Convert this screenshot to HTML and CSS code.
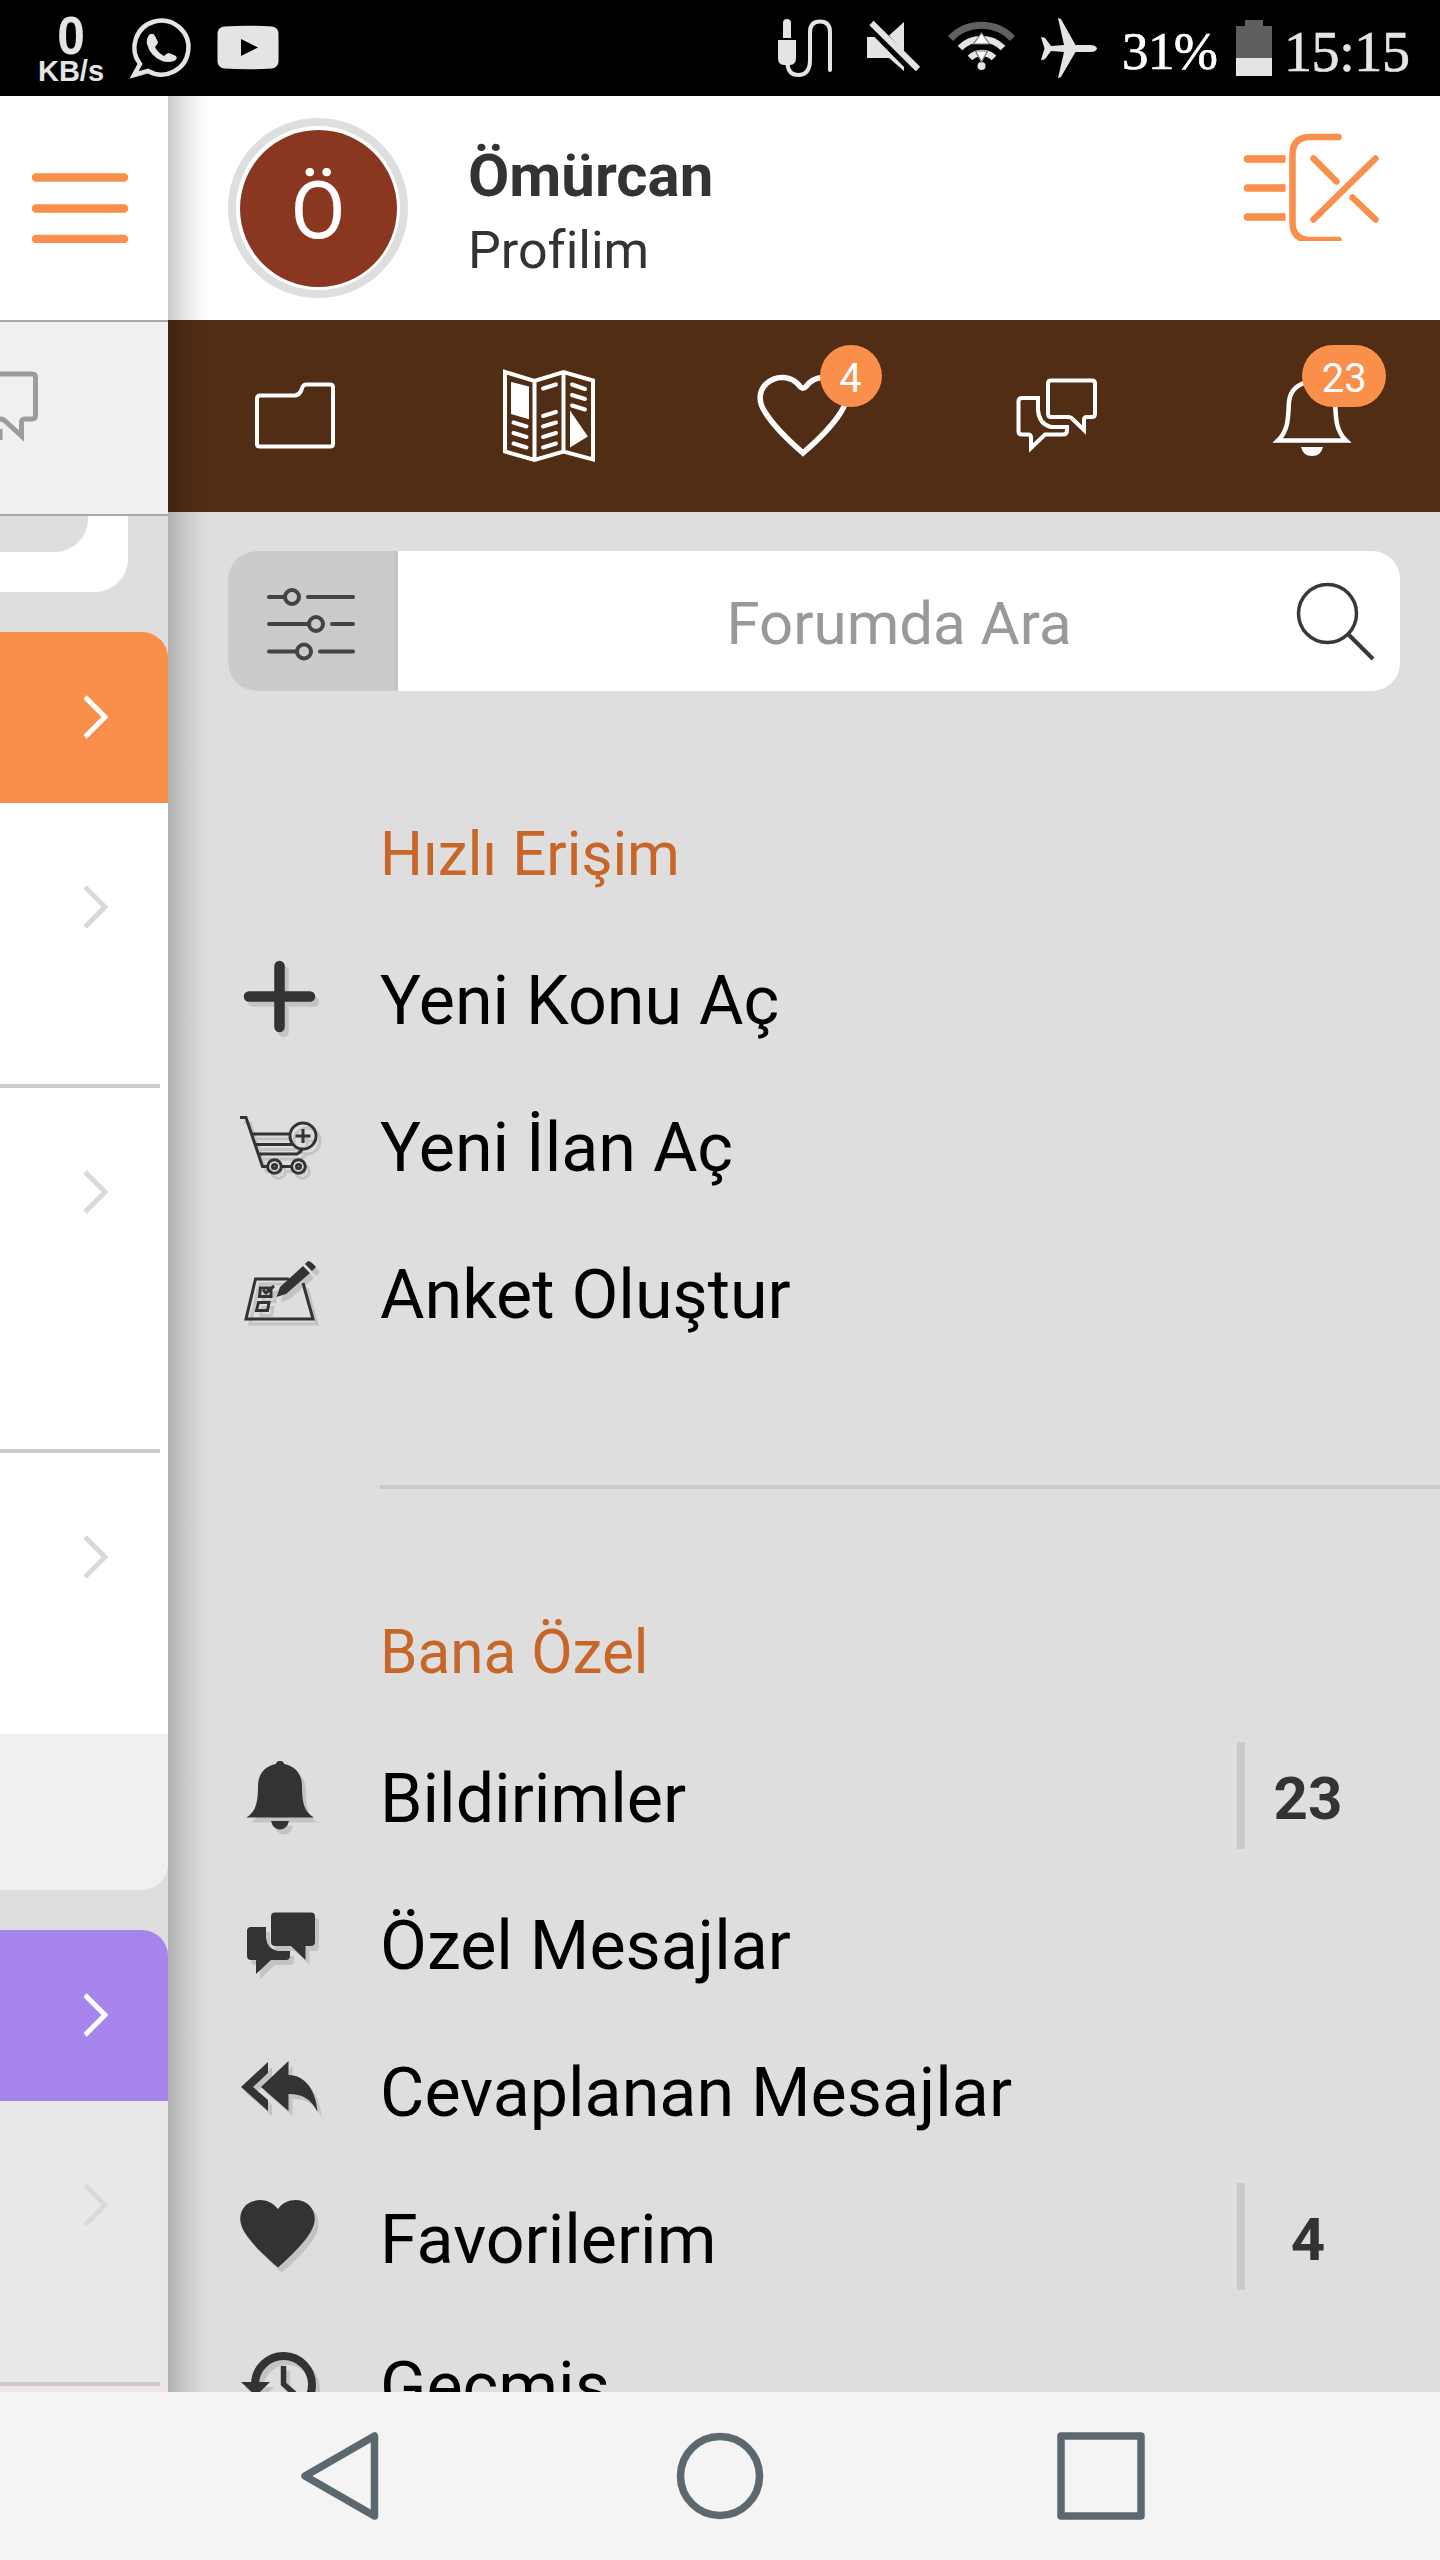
FILE: index.html
```html
<!DOCTYPE html>
<html lang="tr">
<head>
<meta charset="utf-8">
<title>Forum</title>
<link rel="stylesheet" href="styles.css">
</head>
<body>
<header class="status">
  <div class="speed"><span class="speed-value">0</span><span class="speed-unit">KB/s</span></div>
  <svg class="status-left" width="160" height="96" viewBox="124 0 160 96">
    <path d="M140 64A27 27 0 1 1 148 71L134 75Z" fill="none" stroke="#e4e4e4" stroke-width="4.5"/>
    <path d="M149 35q4-3 6 1l3 6q0 2-3 5q3 6 9 9q3-3 5-3l7 3q2 3-2 5q-6 2-12 0q-12-5-15-17q-1-5 2-9z" fill="#e4e4e4"/>
    <path d="M224 26.5q24-1.500 48 0q6 .5 6.500 7v28q-.5 6-6.500 7q-24 1.500-48 0q-6-1-6.500-7v-28q.5-6.500 6.500-7z" fill="#e4e4e4"/>
    <path d="M241 39l17 8.500-17 8.500z"/>
  </svg>
  <svg class="status-right" width="345" height="96" viewBox="770 0 345 96" fill="#e4e4e4">
    <path d="M783 38V23q0-4 4-4t4 4v15zM778 40h18v18q0 7-6 7h-6q-6 0-6-7z"/>
    <path d="M787.500 64q1 11 10.500 11q12 0 12-15V32q0-10.500 10-10.500T830 32v38" fill="none" stroke="#e4e4e4" stroke-width="4" stroke-linecap="round"/>
    <path d="M867 37h7.500L904 67v4L889 58h-22zM904 22l-15 13.500L904 52z"/>
    <path d="M871.500 23L918 69" stroke="#e4e4e4" stroke-width="6"/>
    <path d="M950.500 38.500a43 43 0 0 1 62 0" fill="none" stroke="#606060" stroke-width="7"/>
    <path d="M960 48a30 30 0 0 1 43 0M970 58a17 17 0 0 1 24 0" fill="none" stroke="#e4e4e4" stroke-width="6.500"/>
    <circle cx="981.500" cy="66" r="4"/>
    <path d="M981.500 33l8 11h-16zM981.500 62l6-11h-12z" fill="#fff" stroke="#777" stroke-width="1.200"/>
    <path d="M1097 48.500q-1-4-8-3.500h-13.500L1061.500 20q-1-2-3.500-2L1064 45l-13 1-5.500-7.500q-1-1.500-4.500-1.500l3.500 11.500L1041 60q3.500 0 4.500-1.500L1051 51l13 1-6 26q2.500 0 3.500-2L1075.500 52H1089q7 .5 8-3.500z"/>
  </svg>
  <span class="percent">31%</span>
  <svg class="battery" width="36" height="96" viewBox="0 0 36 96"><path d="M0 26h9v-6h18v6h9v50H0z" fill="#5e5e5e"/><path d="M0 58h36v18H0z" fill="#e4e4e4"/></svg>
  <span class="clock">15:15</span>
</header>

<main class="screen">
  <aside class="page">
    <div class="page-head">
      <svg width="96" height="70" viewBox="32 173 96 70"><path d="M36 177.500H124M36 208.500H124M36 239H124" stroke="#f98f4b" stroke-width="8.500" stroke-linecap="round"/></svg>
    </div>
    <div class="page-tabs">
      <svg width="60" height="192" viewBox="0 322 60 192" fill="none" stroke="#9c9c9c" stroke-width="5"><path d="M-10 374H32q3.500 0 3.500 3.500V415q0 4-3.500 4h-7q-3.500 0-3.500 3.500V436L4 420q-2-1-4-1h-10M0 440V429"/></svg>
    </div>
    <div class="page-body">
      <div class="banner"><div class="banner-inner"></div></div>
      <section class="card">
        <div class="card-head orange"><svg class="chev" viewBox="0 0 24 44"><path d="M1 2L21 22 1 42"/></svg></div>
        <div class="entry h1"><svg class="chev" viewBox="0 0 24 44"><path d="M1 2L21 22 1 42"/></svg></div>
        <div class="entry h2"><svg class="chev" viewBox="0 0 24 44"><path d="M1 2L21 22 1 42"/></svg></div>
        <div class="entry h3"><svg class="chev" viewBox="0 0 24 44"><path d="M1 2L21 22 1 42"/></svg></div>
        <div class="card-foot"></div>
      </section>
      <section class="card">
        <div class="card-head purple"><svg class="chev" viewBox="0 0 24 44"><path d="M1 2L21 22 1 42"/></svg></div>
        <div class="entry h1 read"><svg class="chev" viewBox="0 0 24 44"><path d="M1 2L21 22 1 42"/></svg></div>
        <div class="entry pinned"></div>
      </section>
    </div>
  </aside>

  <section class="drawer">
    <div class="profile">
      <div class="avatar"><span>Ö</span></div>
      <div class="who"><div class="name">Ömürcan</div><div class="link">Profilim</div></div>
      <svg width="140" height="110" viewBox="1240.5 130.5 140 110" fill="none" stroke="#f98f4b" stroke-width="6.500" stroke-linecap="round">
        <path d="M1248 158.500H1282M1248 187.500H1282M1248 216.500H1282" stroke-width="7.500"/><path d="M1280 158.500H1286M1280 187.500H1286M1280 216.500H1286" stroke-width="7.500" stroke-linecap="butt"/>
        <path d="M1339 136.500H1310Q1293 137 1293 154V222Q1293 239 1310 239.500H1339M1314 158L1337 181M1376 158L1314 219M1353 197L1376 219"/>
      </svg>
    </div>

    <nav class="tabs">
      <div class="tab"><svg width="120" height="192" viewBox="235 320 120 192"><path d="M257 399q0-3.500 3-3.500H295q4-.5 6-4.500l1.500-4q1-2.500 4-2.500H330q3 0 3 3V444q0 2.500-3 2.500H260q-3 0-3-2.500z" stroke-width="4"/></svg></div>
      <div class="tab"><svg width="120" height="192" viewBox="489 320 120 192" stroke-width="4">
        <path d="M505 372L534.500 381 563.500 372 593 380.500V459.500L563.500 451.500 534.500 460 505 451.500zM534.500 381V460M563.500 372V451.500"/>
        <path d="M513 384.500L527 388V416.500L513 412.500zM572 417L585 436 572 444z" fill="#fff"/>
        <path d="M513.500 422.500L526.500 426.500M513.500 433L526.500 437M513.500 443.500L526.500 447.500M543 388.500L556 384.500M543 416L556 412M543 426.500L556 422.500M543 437L556 433M543 447.500L556 443.500M572 384.500L585 389M572 395L585 399M572 405.500L585 409.500" stroke-linecap="round"/></svg></div>
      <div class="tab"><svg width="120" height="192" viewBox="744 320 120 192"><path d="M803 453C788 440 773 425 765 412C757 400 760 390 766 384C777 374 792 376 800 386.500Q803 390 806 386.500C814 376 829 374 840 384C846 390 849 400 841 412C833 425 818 440 803 453z" stroke-width="5.500"/></svg><span class="badge">4</span></div>
      <div class="tab"><svg width="120" height="192" viewBox="998 320 120 192" stroke-width="4"><path d="M1051 380.500H1092q3 0 3 3V413.500q0 3.500-3 3.500h-5q-3 0-3 3V430L1071.500 418q-1-1-3-1H1051q-3 0-3-3.500V383.500q0-3 3-3zM1022 398H1038V410Q1039 424 1051 427H1067V430.500Q1067 434.500 1063 434.500H1045L1031 448V437.500Q1031 434.500 1028 434.500H1022q-3.500 0-3.500-3V401.500q0-3.500 3.500-3.500z"/></svg></div>
      <div class="tab"><svg width="120" height="192" viewBox="1252 320 120 192" stroke-width="4.500"><path d="M1278 440.500C1289 430 1288 416 1289 402C1290 390 1299 382 1312 382S1334 390 1335 402C1336 416 1335 430 1346 440.500z"/><path d="M1301 447H1323Q1321 456 1312 456T1301 447" fill="#fff" stroke="none"/></svg><span class="badge wide">23</span></div>
    </nav>

    <div class="content">
      <div class="search">
        <div class="filter"><svg width="96" height="80" viewBox="265 583 96 80" fill="none" stroke="#444" stroke-width="4" stroke-linecap="round"><path d="M270 596H285M309 596H354M270 623H309M333 623H354M270 650.500H297M321 650.500H354"/><circle cx="293" cy="596" r="7"/><circle cx="317" cy="623" r="7"/><circle cx="305" cy="650.500" r="7"/></svg></div>
        <div class="field">Forumda Ara</div>
        <svg class="lens" width="90" height="90" viewBox="1290 576 90 90" fill="none" stroke="#383838"><circle cx="1327.500" cy="613.500" r="29" stroke-width="3.500"/><path d="M1348 634L1373 659" stroke-width="4"/></svg>
      </div>

      <section class="group first">
        <h2>Hızlı Erişim</h2>
        <div class="item"><svg viewBox="228 927 152 147"><path d="M279.500 966V1027M249 996.500H310" stroke-width="10.500" stroke-linecap="round"/></svg><span>Yeni Konu Aç</span></div>
        <div class="item"><svg viewBox="228 1074 152 147" stroke-width="3"><path d="M240 1117.500H246L262.500 1166.500H267M282 1166.500H291M252 1134H289M255 1144.500H292M258 1154H297Q301 1152 303 1148M303 1129V1143M295.500 1136H310.500"/><circle cx="303" cy="1136" r="13"/><circle cx="274.500" cy="1166.500" r="6.800"/><circle cx="298.500" cy="1166.500" r="6.800"/><circle cx="274.500" cy="1166.500" r="2"/><circle cx="298.500" cy="1166.500" r="2"/></svg><span>Yeni İlan Aç</span></div>
        <div class="item"><svg viewBox="228 1221 152 147" stroke-width="3"><path d="M289 1279H255.500L246 1319H313L303 1283M260.500 1288H271V1296.500H259.500zM263 1290L266 1293 274 1286M258.500 1302.500H269L267.500 1310.500H256.500z"/><path d="M276.500 1297L280 1287 303 1266 310 1273 286 1294zM305 1264L308 1261Q311 1261 316 1267L312 1271z" fill="#333" stroke="none"/></svg><span>Anket Oluştur</span></div>
      </section>

      <section class="group second">
        <h2>Bana Özel</h2>
        <div class="item"><svg viewBox="228 1725 152 147" class="solid"><path d="M246 1817.500C256 1812 258 1802 258 1786C258 1774 265 1766 276 1764Q276 1761 280 1761T284 1764C295 1766 302 1774 302 1786C302 1802 304 1812 314 1817.500zM271 1821H289Q287 1829.500 280 1829.500T271 1821"/></svg><span>Bildirimler</span><b>23</b></div>
        <div class="item"><svg viewBox="228 1872 152 147" class="solid"><path d="M275 1912.500H311q4 0 4 4V1942q0 4-4 4H305.500V1960L291 1946H275q-4 0-4-4V1916.500q0-4 4-4zM251 1927H266V1938Q267 1949 278 1951H290V1955.500Q290 1960 286 1960H271L256 1974V1960H251q-4 0-4-4V1931q0-4 4-4z"/></svg><span>Özel Mesajlar</span></div>
        <div class="item"><svg viewBox="228 2019 152 147" class="solid"><path d="M241 2087L268 2062V2073L253 2087 268 2100V2111zM261 2087L288.500 2061V2075C305 2075 316 2090 317.500 2112C311 2099 303 2094 288.500 2094V2111z"/></svg><span>Cevaplanan Mesajlar</span></div>
        <div class="item"><svg viewBox="228 2166 152 147" class="solid"><path d="M278 2267.500C264 2255 252 2244 245 2233C238 2222 239 2212 246 2205C256 2197 270 2199 278 2209C285 2199 300 2197 309 2205C316 2212 317 2222 310 2233C303 2244 291 2256 278 2267.500z"/></svg><span>Favorilerim</span><b>4</b></div>
        <div class="item"><svg viewBox="228 2313 152 147"><path d="M255 2384A28.500 28.500 0 1 1 283 2413" stroke-width="8"/><path d="M283.500 2366V2384L297 2396" stroke-width="5.500"/><path d="M241 2382H270L256 2396z" fill="#333" stroke="none"/></svg><span>Geçmiş</span></div>
      </section>
    </div>
    <div class="edge-shadow"></div>
  </section>
</main>

<footer class="softkeys">
  <svg width="90" height="90" viewBox="293 2430.5 90 90"><path d="M304 2475.500L373.500 2435.500V2515.500z"/></svg>
  <svg width="90" height="90" viewBox="675.500 2431 90 90"><circle cx="720.500" cy="2476" r="39.500"/></svg>
  <svg width="90" height="90" viewBox="1056 2431 90 90"><path d="M1061 2436H1141V2516H1061z"/></svg>
</footer>
</body>
</html>
```
FILE: styles.css
```css
* { box-sizing: border-box; }
body {
  margin: 0;
  width: 1440px;
  height: 2560px;
  overflow: hidden;
  display: flex;
  flex-direction: column;
  font-family: Roboto, "Liberation Sans", sans-serif;
  color: #333;
}
svg { display: block; flex: none; }

/* Status bar */
.status { height: 96px; flex: none; display: flex; background: #000; color: #e4e4e4; }
.speed {
  width: 90px; margin-left: 26px;
  display: flex; flex-direction: column; align-items: center;
  font-family: "Liberation Sans", Arial, sans-serif; font-weight: bold;
}
.speed-value { font-size: 54px; line-height: 38px; padding-top: 16px; transform: scaleX(.92); }
.speed-unit { font-size: 29px; line-height: 32px; padding-top: 1px; }
.status-left { margin-left: 8px; }
.status-right { margin-left: auto; }
.percent, .clock { font-family: "Liberation Serif", "Times New Roman", serif; white-space: nowrap; -webkit-text-stroke: .7px currentColor; }
.percent { width: 121px; padding-left: 7px; font-size: 53px; line-height: 102px; letter-spacing: -.6px; color: #fff; }
.clock { width: 168px; padding-left: 12px; font-size: 56px; line-height: 105px; letter-spacing: -.4px; }

.screen { height: 2296px; flex: none; display: flex; overflow: hidden; }

/* Page pushed aside by the drawer */
.page { width: 168px; flex: none; height: 2296px; display: flex; flex-direction: column; overflow: hidden; background: #dedede; }
.page-head { height: 224px; flex: none; padding: 77px 0 0 32px; background: #fff; }
.page-tabs { height: 196px; flex: none; border: solid #aaa; border-width: 2px 0; background: #f0f0f0; }
.page-body { flex: none; }
.banner { width: 128px; height: 76px; background: #fff; border-radius: 0 0 33px 0; }
.banner-inner { width: 88px; height: 36px; background: #dedede; border-radius: 0 0 33px 0; }
.card { margin-top: 40px; border-radius: 0 26px 26px 0; overflow: hidden; }
.card-head { height: 171px; padding: 62.5px 0 0 84px; }
.orange { background: #f98f4b; }
.purple { background: #a584ee; }
.entry { padding: 82px 0 0 84px; background: #fff linear-gradient(#ccc, #ccc) 0 100% / 160px 4px no-repeat; }
.h1 { height: 285px; }
.h2 { height: 365px; }
.h3 { height: 281px; background: #fff; }
.read { background-color: #eae8eb; }
.pinned { height: 100px; background: #f3e5e7; }
.card-foot { height: 156px; background: #f0f0f0; }
.chev { width: 24px; height: 44px; fill: none; stroke: #d9d9d9; stroke-width: 5; }
.card-head .chev { stroke: #fff; }

/* Drawer */
.drawer { position: relative; flex: 1; background: #dedede; }
.edge-shadow {
  position: absolute; left: 0; top: 0; width: 40px; height: 100%;
  background: linear-gradient(90deg, rgba(0,0,0,.21), rgba(0,0,0,.09) 45%, rgba(0,0,0,.03) 80%, rgba(0,0,0,0));
}
.profile { height: 224px; display: flex; padding: 22px 60px 0 60px; background: #fff; }
.avatar {
  width: 180px; height: 180px; flex: none; padding: 4px;
  border: 8px solid #dedede; border-radius: 50%;
  font-size: 80px; line-height: 163px; text-align: center; color: #fff;
}
.avatar span { display: block; width: 157px; height: 157px; margin: -.5px; border-radius: 50%; background: #8a3722; }
.who { flex: 1; padding: 23px 0 0 60px; }
.name { font-size: 60px; line-height: 70px; font-weight: bold; }
.link { font-size: 52px; line-height: 80px; }
.profile > svg { margin-top: 13px; }

.tabs { height: 192px; display: flex; background: #522d15; }
.tab { position: relative; width: 254.3px; display: flex; justify-content: center; }
.tab svg { fill: none; stroke: #fff; }
.badge {
  position: absolute; left: 143px; top: 25px; min-width: 62px; height: 62px; border-radius: 31px;
  background: #f98f4b; color: #fff; font-size: 40px; line-height: 67px; text-align: center;
}
.badge.wide { left: 117px; width: 84px; }

.content { padding: 39px 0 0 60px; }
.search { width: 1172px; height: 140px; display: flex; align-items: center; border-radius: 28px; overflow: hidden; background: #fff; position: relative; }
.filter { width: 170px; height: 140px; padding: 33px 0 0 36px; background: #cbcbcb; border-right: 4px solid #c4c5cc; }
.field { flex: 1; padding-top: 5px; font-size: 60px; line-height: 70px; text-align: center; color: #999; }
.lens { position: absolute; right: 20px; top: 25px; }

.group h2 { margin: 0; padding-left: 152px; font-size: 60.2px; line-height: 68px; font-weight: normal; color: #c76628; }
.first { padding-top: 130px; }
.first h2 { height: 106px; }
.second { margin: 117px 0 0; }
.second::before { content: ""; display: block; height: 4px; margin: 0 0 130px 152px; background: #cacaca; }
.second h2 { height: 106px; }
.item { height: 147px; display: flex; align-items: center; font-size: 68.2px; line-height: 147px; color: #000; }
.item span { flex: 1; padding-top: 2px; white-space: nowrap; }
.item svg { width: 152px; height: 147px; fill: none; stroke: #333; filter: drop-shadow(4px 5px 0 rgba(0,0,0,.12)); }
.item svg.solid { fill: #333; stroke: none; }
.item b {
  width: 203px; height: 107px; margin-top: -6px; padding: 3px 69px 0 0; border-left: 8px solid #cacaca;
  font-size: 60px; line-height: 107px; text-align: center; color: #333;
}

/* Navigation keys */
.softkeys { height: 168px; flex: none; display: flex; justify-content: space-between; padding: 39px 294px 0; background: #f4f4f4; }
.softkeys svg { fill: none; stroke: #5c6870; stroke-width: 7.5; stroke-linejoin: round; }
```
